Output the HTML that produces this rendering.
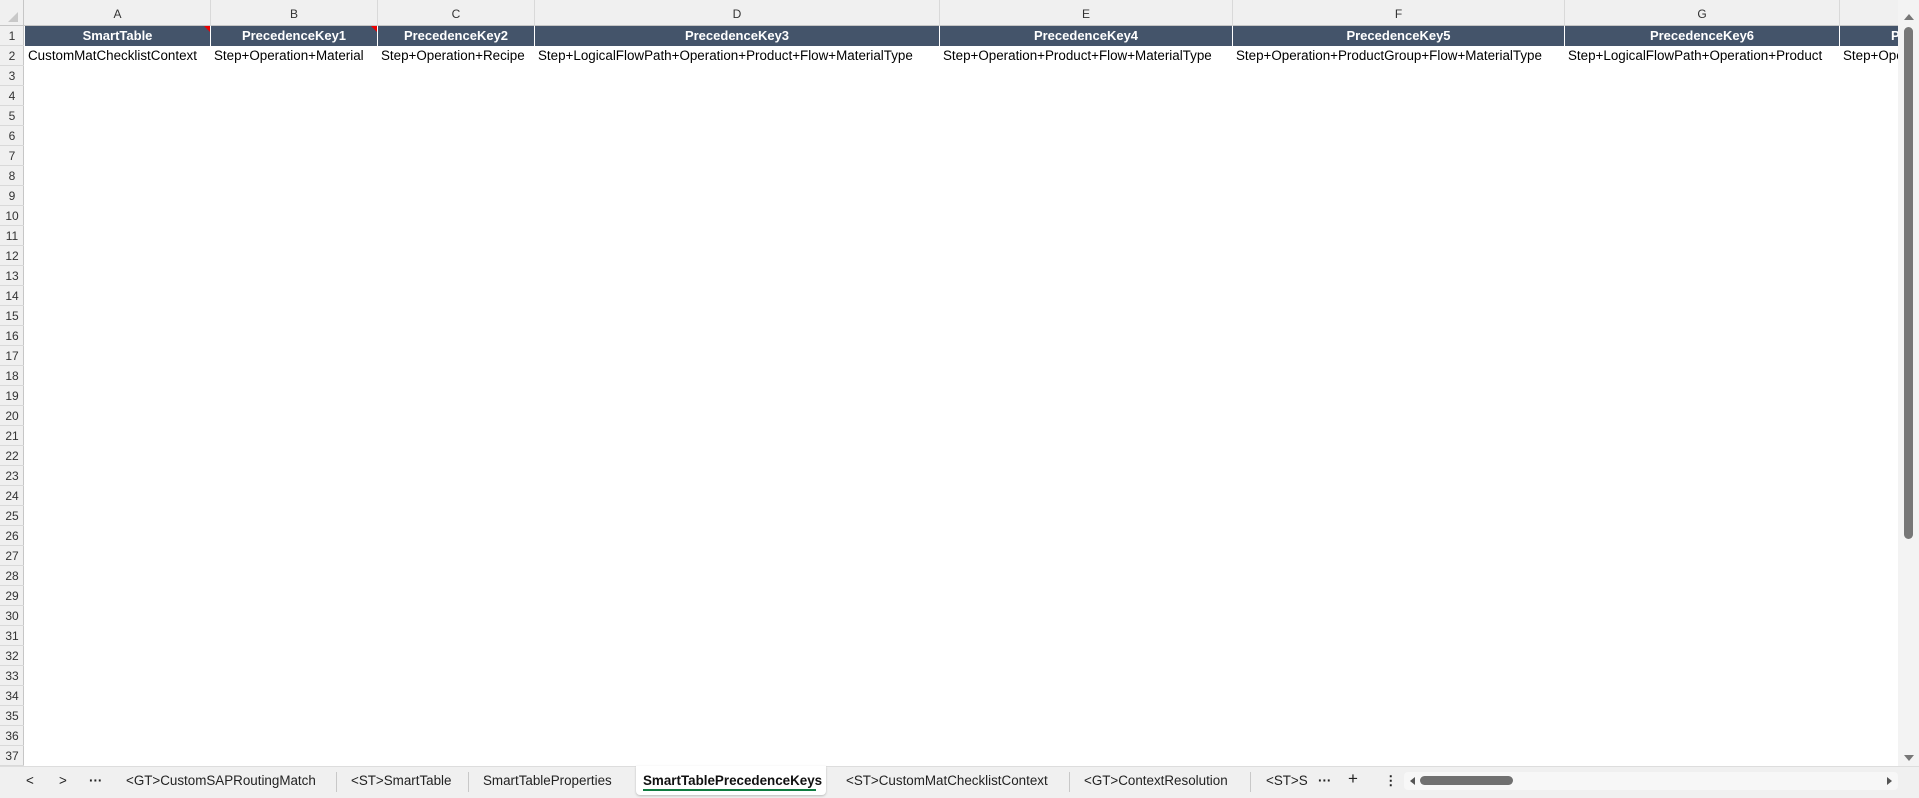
<!DOCTYPE html>
<html><head><meta charset="utf-8"><style>
*{margin:0;padding:0;box-sizing:border-box}
body{width:1919px;height:798px;overflow:hidden;background:#fff;font-family:"Liberation Sans",sans-serif;position:relative}
.abs{position:absolute}
.colhdr{top:0;height:26px;background:#f0f0f0;border-bottom:1px solid #c6c6c6}
.ch{position:absolute;top:0;height:26px;line-height:28px;text-align:center;font-size:12px;color:#333;border-right:1px solid #d9d9d9}
.rowhdr{left:0;width:24px;background:#f0f0f0;border-right:1px solid #c6c6c6}
.rn{position:absolute;left:0;width:24px;height:20px;line-height:20px;text-align:center;font-size:12px;color:#333;border-bottom:1px solid #d9d9d9}
.h1{position:absolute;top:26px;height:20px;background:#44546a;color:#fff;font-weight:bold;font-size:13px;line-height:20px;text-align:center;border-right:1px solid #fff;overflow:hidden;white-space:nowrap}
.c2{position:absolute;top:46px;height:20px;font-size:13.4px;line-height:20px;padding-left:3px;color:#000;white-space:nowrap;overflow:hidden}
.tri{position:absolute;top:0;right:0;width:0;height:0;border-top:6px solid #e00;border-left:6px solid transparent}
.tab{position:absolute;top:773px;font-size:13.4px;color:#222;white-space:nowrap}
.sep{position:absolute;top:772px;width:1px;height:20px;background:#c8c8c8}
</style></head><body>
<div class="abs colhdr" style="left:0;width:1898px"></div>
<div class="abs" style="left:0;top:0;width:24px;height:26px;background:#f0f0f0;border-right:1px solid #c6c6c6;border-bottom:1px solid #c6c6c6"></div>
<div class="abs" style="left:8px;top:12px;width:0;height:0;border-bottom:10px solid #c8c8c8;border-left:10px solid transparent"></div>
<div class="ch" style="left:25px;width:186px">A</div>
<div class="ch" style="left:211px;width:167px">B</div>
<div class="ch" style="left:378px;width:157px">C</div>
<div class="ch" style="left:535px;width:405px">D</div>
<div class="ch" style="left:940px;width:293px">E</div>
<div class="ch" style="left:1233px;width:332px">F</div>
<div class="ch" style="left:1565px;width:275px">G</div>
<div class="abs rowhdr" style="top:26px;height:740px"></div>
<div id="rows"></div>
<div class="h1" style="left:25px;width:186px">SmartTable<span class="tri"></span></div>
<div class="h1" style="left:211px;width:167px">PrecedenceKey1<span class="tri"></span></div>
<div class="h1" style="left:378px;width:157px">PrecedenceKey2</div>
<div class="h1" style="left:535px;width:405px">PrecedenceKey3</div>
<div class="h1" style="left:940px;width:293px">PrecedenceKey4</div>
<div class="h1" style="left:1233px;width:332px">PrecedenceKey5</div>
<div class="h1" style="left:1565px;width:275px">PrecedenceKey6</div>
<div class="h1" style="left:1840px;width:58px;border-right:none;text-align:left;padding-left:51px">PrecedenceKey7</div>
<div class="c2" style="left:25px;width:186px">CustomMatChecklistContext</div>
<div class="c2" style="left:211px;width:167px">Step+Operation+Material</div>
<div class="c2" style="left:378px;width:157px">Step+Operation+Recipe</div>
<div class="c2" style="left:535px;width:405px">Step+LogicalFlowPath+Operation+Product+Flow+MaterialType</div>
<div class="c2" style="left:940px;width:293px">Step+Operation+Product+Flow+MaterialType</div>
<div class="c2" style="left:1233px;width:332px">Step+Operation+ProductGroup+Flow+MaterialType</div>
<div class="c2" style="left:1565px;width:275px">Step+LogicalFlowPath+Operation+Product</div>
<div class="c2" style="left:1840px;width:58px">Step+Operation</div>
<script>
var h='';for(var i=1;i<=37;i++){h+='<div class="rn" style="top:'+(26+(i-1)*20)+'px">'+i+'</div>';}
document.getElementById('rows').innerHTML=h;
</script>
<div class="abs" style="left:1898px;top:0;width:21px;height:766px;background:#f3f3f3"></div>
<div class="abs" style="left:1904px;top:14px;width:0;height:0;border-left:5px solid transparent;border-right:5px solid transparent;border-bottom:6px solid #777"></div>
<div class="abs" style="left:1904px;top:27px;width:9px;height:512px;background:#777;border-radius:5px"></div>
<div class="abs" style="left:1904px;top:755px;width:0;height:0;border-left:5px solid transparent;border-right:5px solid transparent;border-top:6px solid #777"></div>
<div class="abs" style="left:0;top:766px;width:1919px;height:32px;background:#f0f0f0;border-top:1px solid #ddd"></div>
<div class="tab" style="left:26px">&lt;</div>
<div class="tab" style="left:59px">&gt;</div>
<div class="tab" style="left:89px;font-weight:bold">···</div>
<div class="tab" style="left:126px">&lt;GT&gt;CustomSAPRoutingMatch</div>
<div class="sep" style="left:336px"></div>
<div class="tab" style="left:351px">&lt;ST&gt;SmartTable</div>
<div class="sep" style="left:468px"></div>
<div class="tab" style="left:483px">SmartTableProperties</div>
<div class="abs" style="left:636px;top:766px;width:190px;height:29px;background:#fff;border-radius:0 0 4px 4px;box-shadow:0 1px 2px #bbb"></div>
<div class="tab" style="left:643px;font-weight:bold;color:#111">SmartTablePrecedenceKeys</div>
<div class="abs" style="left:643px;top:789px;width:173px;height:2px;background:#107c41"></div>
<div class="tab" style="left:846px">&lt;ST&gt;CustomMatChecklistContext</div>
<div class="sep" style="left:1069px"></div>
<div class="tab" style="left:1084px">&lt;GT&gt;ContextResolution</div>
<div class="sep" style="left:1250px"></div>
<div class="tab" style="left:1266px;width:42px;overflow:hidden">&lt;ST&gt;SmartTable2</div>
<div class="tab" style="left:1318px;font-weight:bold">···</div>
<div class="tab" style="left:1348px;font-size:17px;top:769px">+</div>
<div class="tab" style="left:1384px;font-weight:bold">⋮</div>
<div class="abs" style="left:1404px;top:772px;width:494px;height:18px;background:#f7f7f7;border-radius:4px"></div>
<div class="abs" style="left:1410px;top:777px;width:0;height:0;border-top:4px solid transparent;border-bottom:4px solid transparent;border-right:5px solid #555"></div>
<div class="abs" style="left:1420px;top:776px;width:93px;height:9px;background:#707070;border-radius:5px"></div>
<div class="abs" style="left:1887px;top:777px;width:0;height:0;border-top:4px solid transparent;border-bottom:4px solid transparent;border-left:5px solid #555"></div>
</body></html>
